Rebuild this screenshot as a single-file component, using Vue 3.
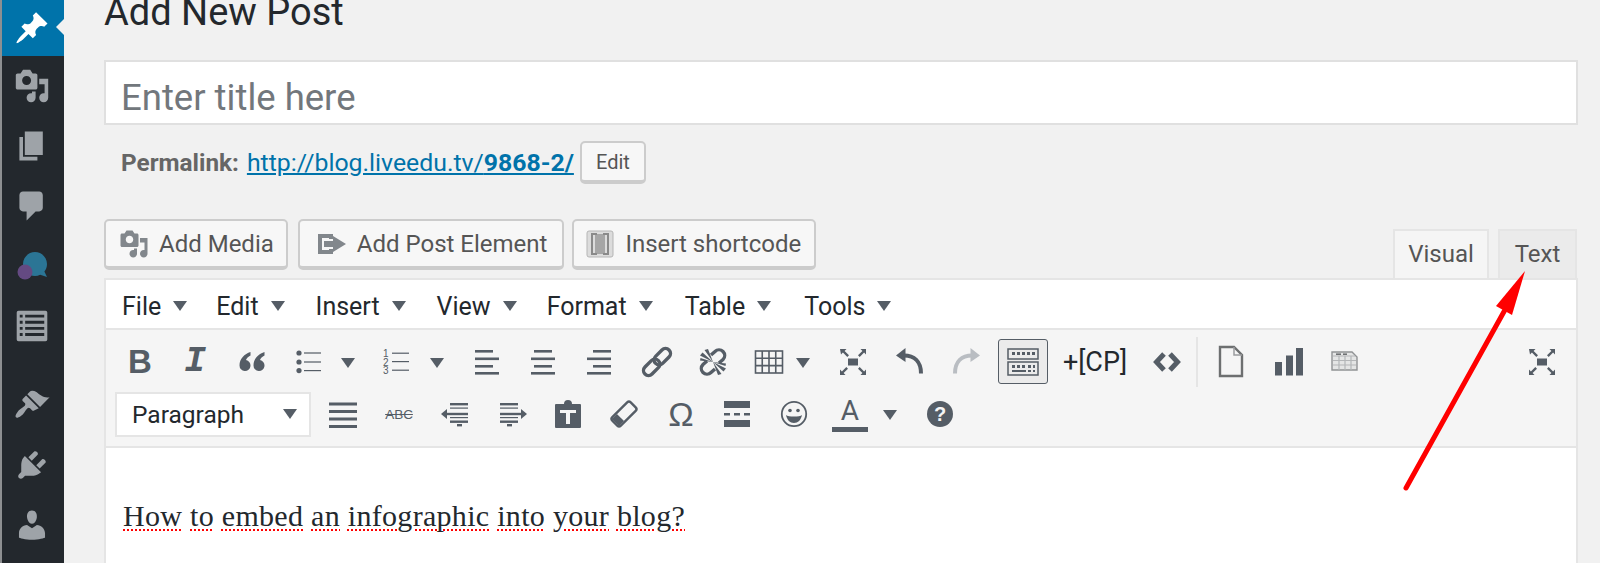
<script setup>
const media = 'M13 11V4c0-.55-.45-1-1-1h-1.67L9 1H5L3.67 3H2c-.55 0-1 .45-1 1v7c0 .55.45 1 1 1h10c.55 0 1-.45 1-1zM7 4.5c1.38 0 2.5 1.12 2.5 2.5S8.38 9.5 7 9.5 4.5 8.38 4.5 7 5.62 4.5 7 4.5zM14 6h5v10.5c0 1.38-1.12 2.5-2.5 2.5S14 17.88 14 16.5s1.12-2.5 2.5-2.5c.17 0 .34.02.5.05V9h-3V6zm-4 8.05V13h2v3.5c0 1.38-1.12 2.5-2.5 2.5S7 17.88 7 16.5 8.12 14 9.5 14c.17 0 .34.02.5.05z'

const sideItems = [
  { id: 'pin', d: 'M10.44 3.02l1.82-1.82 6.36 6.35-1.83 1.82c-1.05-.68-2.48-.57-3.41.36l-.75.75c-.92.93-1.04 2.35-.35 3.41l-1.83 1.82-2.41-2.41-2.8 2.79c-.42.42-3.38 2.71-3.8 2.29s1.86-3.39 2.28-3.81l2.79-2.79L4.1 9.36l1.83-1.82c1.05.69 2.48.57 3.4-.36l.75-.75c.93-.92 1.05-2.35.36-3.41z' },
  { id: 'media', d: media },
  { id: 'pages', d: 'M6 15V2h10v13H6zm-1 1h8v2H3V5h2v11z' },
  { id: 'comments', d: 'M5 2h9c1.1 0 2 .9 2 2v7c0 1.1-.9 2-2 2h-2l-5 5v-5H5c-1.1 0-2-.9-2-2V4c0-1.1.9-2 2-2z' },
  { id: 'chat' },
  { id: 'list', d: 'M2.5 1.5h15a1 1 0 0 1 1 1v15a1 1 0 0 1-1 1h-15a1 1 0 0 1-1-1v-15a1 1 0 0 1 1-1zM3.2 3.7v1.6h1.6V3.7zm3 0v1.6h10.6V3.7zm-3 3.4v1.6h1.6V7.1zm3 0v1.6h10.6V7.1zm-3 3.4v1.6h1.6v-1.6zm3 0v1.6h10.6v-1.6zm-3 3.4v1.6h1.6v-1.6zm3 0v1.6h10.6v-1.6z' },
  { id: 'brush', d: 'M14.48 11.06L7.41 3.99l1.5-1.5c.5-.56 2.3-.47 3.51.32 1.21.8 1.43 1.28 2.91 2.1 1.18.64 2.45 1.26 4.45.85zm-.71.71L6.7 4.7 4.93 6.47c-.39.39-.39 1.02 0 1.41l1.06 1.06c.39.39.39 1.03 0 1.42-.6.6-1.43 1.11-2.21 1.69-.35.26-.7.53-1.01.84-.74.74-2.5 3-1.7 3.9.8.9 3.2-1 3.9-1.7.31-.31.58-.66.84-1.01.58-.78 1.09-1.61 1.69-2.21.39-.39 1.03-.39 1.42 0l1.06 1.06c.39.39 1.02.39 1.41 0z' },
  { id: 'plugin', d: 'M13.11 4.36L9.87 7.6 8 5.73l3.24-3.24c.35-.34 1.05-.2 1.56.32.52.51.66 1.21.31 1.55zm-8 1.77l.91-1.12 9.01 9.01-1.19.84c-.71.71-2.63 1.16-3.82 1.16H6.14L4.9 17.26c-.59.59-1.54.59-2.12 0-.59-.58-.59-1.53 0-2.12l1.24-1.24v-3.88c0-1.13.4-3.19 1.09-3.89zm7.26 3.97l3.24-3.24c.34-.35 1.04-.21 1.55.31.52.51.66 1.21.31 1.55l-3.24 3.25z' },
  { id: 'user', d: 'M10 9.25c-2.27 0-2.73-3.44-2.73-3.44C7 4.02 7.82 2 9.97 2c2.16 0 2.98 2.02 2.71 3.81 0 0-.41 3.44-2.68 3.44zm0 2.57L12.72 10c2.39 0 4.52 2.33 4.52 4.53v2.49s-3.65 1.13-7.24 1.13c-3.65 0-7.24-1.13-7.24-1.13v-2.49c0-2.25 1.94-4.48 4.47-4.48z' },
]

const menus = [
  { label: 'File', gap: 0 },
  { label: 'Edit', gap: 29 },
  { label: 'Insert', gap: 31 },
  { label: 'View', gap: 31 },
  { label: 'Format', gap: 30 },
  { label: 'Table', gap: 32 },
  { label: 'Tools', gap: 33 },
]

const caret = '<path d="M6 9h14l-7 10z"/>'
const bars = (rows) => rows.map(r => `<rect x="${r[0]}" y="${r[1]}" width="${r[2]}" height="${r[3] || 2.6}"/>`).join('')
const fullscreen = '<rect x="8" y="9.5" width="10" height="7"/><path d="M0 0h6.5L4.6 1.9 9 6.3 7.3 8 2.9 3.6 1 5.5zM26 0v5.5l-1.9-1.9L19.7 8 18 6.3l4.4-4.4L20.5 0zM0 26v-5.5l1.9 1.9L6.3 18 8 19.7l-4.4 4.4L5.5 26zM26 26h-5.5l1.9-1.9L18 19.7l1.7-1.7 4.4 4.4 1.9-1.9z"/>'

const icons = {
  quote: '<path d="M11.500 3C5.500 5 .5 9.500 .5 16.500a5.500 5.500 0 1 0 6.500-5.400c.6-1.800 2.200-3.400 4.500-4.600zM25.500 3c-6 2-11 6.500-11 13.500a5.500 5.500 0 1 0 6.500-5.400c.6-1.800 2.200-3.400 4.500-4.600z"/>',
  bullist: '<circle cx="3" cy="4" r="2.6"/><circle cx="3" cy="13" r="2.6"/><circle cx="3" cy="21.6" r="2.6"/><rect x="8" y="3.4" width="17" height="1.2"/><rect x="8" y="12.4" width="17" height="1.2"/><rect x="8" y="21" width="17" height="1.2"/>',
  numlist: '<text x="-1" y="8" class="num">1</text><text x="-1" y="16.500" class="num">2</text><text x="-1" y="25" class="num">3</text><rect x="8" y="3.600" width="17" height="1.2"/><rect x="8" y="12" width="17" height="1.2"/><rect x="8" y="20.600" width="17" height="1.2"/>',
  left: bars([[1, 1, 18], [1, 8.5, 24], [1, 16, 18], [1, 23, 24]]),
  center: bars([[4, 1, 18], [1, 8.5, 24], [4, 16, 18], [1, 23, 24]]),
  right: bars([[7, 1, 18], [1, 8.5, 24], [7, 16, 18], [1, 23, 24]]),
  link: '<g transform="rotate(-45 13 13)" fill="none" stroke="#555d66" stroke-width="3.400"><rect x="-4" y="8" width="19" height="10" rx="5"/><rect x="11" y="8" width="19" height="10" rx="5"/></g>',
  unlink: '<g fill="none" stroke="#555d66" stroke-width="3.400"><path d="M11 6L15 2.500a5.500 5.500 0 0 1 8 8L19 14"/><path d="M15 20l-4 3.500a5.500 5.500 0 0 1-8-8L7 12"/></g><path d="M13 13L0 6.500 2.500 3.500zM13 13L4.500 1 8 0zM13 13L0 11.500 .5 9zM13 13L26 19.500 23.500 22.500zM13 13L21.500 25 18 26zM13 13L26 14.500 25.500 17z"/>',
  table: '<g fill="none" stroke="#555d66" stroke-width="1.6"><rect x="-.5" y="2" width="27" height="22"/><path d="M-.5 9.300h27M-.5 16.600h27M6.250 2v22M13 2v22M19.750 2v22"/></g>',
  fullscreen,
  undo: '<path d="M-1 6.500L8.500 -1v14z"/><path d="M7 6.500c10 0 17 6 17 18" fill="none" stroke="#555d66" stroke-width="4"/>',
  redo: '<g fill="#b9bdc2"><path d="M27 6.500L17.500 -1v14z"/></g><path d="M19 6.500c-10 0-17 6-17 18" fill="none" stroke="#b9bdc2" stroke-width="4"/>',
  code: '<path d="M10 5L2.500 13l7.500 8M16 5l7.500 8-7.500 8" fill="none" stroke="#555d66" stroke-width="5"/>',
  doc: '<path d="M2 0h14l8 8v21H2z" fill="none" stroke="#6d6f70" stroke-width="2.400" transform="translate(0 -2)"/><path d="M16 -2v8h8" fill="none" stroke="#9a9c9e" stroke-width="1.500"/>',
  chart: '<rect x="0" y="13" width="7" height="13.500"/><rect x="11" y="6.500" width="7" height="20"/><rect x="22" y="-1" width="7" height="27.500" transform="translate(-1 0)"/>',
  tblgray: '<path d="M1 3h20l5 5v13H1z" fill="#e4e5e5" stroke="#909294" stroke-width="1.400"/><path d="M2 7h22M2 11.500h23M2 16h23M8 7v14M14 7v14M20 7v14" stroke="#b4b6b8" stroke-width="1.200" fill="none"/><rect x="5" y="4.400" width="5" height="1.600" fill="#6f7173"/><rect x="12" y="4.400" width="4" height="1.600" fill="#6f7173"/>',
  justify: bars([[-1, 1.500, 28, 3], [-1, 9, 28, 3], [-1, 16.500, 28, 3], [-1, 24, 28, 3]]),
  outdent: '<path d="M0 13l6-5v10z"/>' + bars([[9, 2, 18, 2.4], [6, 11.800, 21, 2.400], [9, 19.500, 18, 2.400]]) + '<rect x="9" y="6.500" width="18" height="1.200"/><rect x="9" y="16" width="18" height="1.200"/><rect x="16" y="23" width="5" height="2.400"/>',
  indent: '<path d="M27 13l-6-5v10z"/>' + bars([[0, 2, 18, 2.4], [0, 11.800, 21, 2.400], [0, 19.500, 18, 2.400]]) + '<rect x="0" y="6.500" width="18" height="1.200"/><rect x="0" y="16" width="18" height="1.200"/><rect x="7" y="23" width="5" height="2.400"/>',
  paste: '<path fill-rule="evenodd" d="M1 3h8a4 4 0 0 1 8 0h8a1 1 0 0 1 1 1v22a1 1 0 0 1-1 1H1a1 1 0 0 1-1-1V4a1 1 0 0 1 1-1zM5 9v3h6v11h4V12h6V9z"/>',
  eraser: '<g transform="rotate(-45 13 13)"><rect x="0" y="7" width="26" height="12" rx="2.500" fill="none" stroke="#555d66" stroke-width="2.400"/><path d="M1 8h7v10H1z"/></g>',
  hr: '<rect x="0" y="0" width="26" height="7"/><rect x="0" y="19" width="26" height="7"/><path d="M0 12h6v2.400H0zM10 12h6v2.400h-6zM20 12h6v2.400h-6z"/>',
  smile: '<circle cx="13" cy="13" r="12.200" fill="none" stroke="#555d66" stroke-width="1.800"/><circle cx="9" cy="9.500" r="1.800"/><circle cx="17" cy="9.500" r="1.800"/><path d="M5 14c2 2 14 2 16 0-1 5-4 8-8 8s-7-3-8-8z"/>',
}

const row1 = [
  { text: 'B', cls: 't-bold', x: 140 },
  { text: 'I', cls: 't-ital', x: 195 },
  { icon: 'quote', x: 252 },
  { icon: 'bullist', x: 309 },
  { icon: 'caret', x: 348 },
  { icon: 'numlist', x: 397 },
  { icon: 'caret', x: 437 },
  { icon: 'left', x: 487 },
  { icon: 'center', x: 543 },
  { icon: 'right', x: 599 },
  { icon: 'link', x: 657 },
  { icon: 'unlink', x: 713 },
  { icon: 'table', x: 769 },
  { icon: 'caret', x: 803 },
  { icon: 'fullscreen', x: 853 },
  { icon: 'undo', x: 910 },
  { icon: 'redo', x: 966 },
  { kitchen: true, x: 1023, w: 50 },
  { text: '+[CP]', cls: 't-cp', x: 1095, w: 76 },
  { icon: 'code', x: 1167 },
  { sep: true, x: 1197, w: 2 },
  { icon: 'doc', x: 1231 },
  { icon: 'chart', x: 1288 },
  { icon: 'tblgray', x: 1344 },
  { icon: 'fullscreen', x: 1542 },
]

const row2 = [
  { icon: 'justify', x: 343 },
  { text: 'ABC', cls: 't-abc', x: 399 },
  { icon: 'outdent', x: 454 },
  { icon: 'indent', x: 513 },
  { icon: 'paste', x: 568 },
  { icon: 'eraser', x: 624 },
  { text: '\u03A9', cls: 't-omega', x: 681 },
  { icon: 'hr', x: 737 },
  { icon: 'smile', x: 794 },
  { text: 'A', cls: 't-color', x: 850, w: 36 },
  { icon: 'caret', x: 890 },
  { text: '?', cls: 't-help', x: 940 },
]

// gap in front of each tool comes from the centre positions
const withGaps = (list, startX) => {
  let right = startX
  return list.map(item => {
    const w = item.w || 26
    const ml = item.x - w / 2 - right
    right = item.x + w / 2
    return { ...item, w, ml }
  })
}
const tools1 = withGaps(row1, 106)
const tools2 = withGaps(row2, 311)
const iconFor = name => (name === 'caret' ? caret : icons[name])

const words = ['How', 'to', 'embed', 'an', 'infographic', 'into', 'your', 'blog?']
</script>

<template>
  <div class="page">
    <aside class="sidebar">
      <div v-for="item in sideItems" :key="item.id" class="side-item" :class="'side-' + item.id">
        <svg v-if="item.d" viewBox="0 0 20 20" class="side-icon"><path :d="item.d" /></svg>
        <svg v-else viewBox="0 0 36 36" class="side-icon">
          <path d="M21 4c6.600 0 12 5.400 12 12 0 3-1 5.500-2.600 7.600L33 29l-6.800-2.200C24.600 27.600 22.900 28 21 28 14.400 28 9 22.600 9 16S14.400 4 21 4z" fill="#2b7595" />
          <circle cx="11" cy="24" r="7.500" fill="#644a82" />
        </svg>
      </div>
    </aside>

    <main class="main">
      <h1 class="heading">Add New Post</h1>
      <div class="title-box">Enter title here</div>

      <div class="permalink">
        <strong>Permalink:</strong>
        <a class="perma-link">http://blog.liveedu.tv/<b>9868-2/</b></a>
        <button class="btn btn-small">Edit</button>
      </div>

      <div class="media-row">
        <div class="media-buttons">
          <button class="btn btn-media">
            <svg viewBox="0 0 20 20" class="btn-icon"><path :d="media" /></svg>
            Add Media
          </button>
          <button class="btn btn-element">
            <svg viewBox="0 0 28 24" class="btn-icon btn-icon-wide">
              <path d="M0 2h15v5h-4V6H4v12h7v-1h4v5H0z" />
              <path d="M6 9h9V4l13 8-13 8v-5H6z" />
            </svg>
            Add Post Element
          </button>
          <button class="btn btn-short">
            <svg viewBox="0 0 28 28" class="btn-icon btn-icon-short">
              <rect x="1" y="1" width="26" height="26" rx="2" fill="#dcdcdc" stroke="#b5b5b5" />
              <rect x="9" y="4" width="10" height="20" fill="#a6a6a6" />
              <path d="M11 4H6v20h5M17 4h5v20h-5" fill="none" stroke="#8a8a8a" stroke-width="2" />
            </svg>
            Insert shortcode
          </button>
        </div>
        <div class="tabs">
          <div class="tab tab-on">Visual</div>
          <div class="tab">Text</div>
        </div>
      </div>

      <section class="editor">
        <div class="menubar">
          <span v-for="m in menus" :key="m.label" class="menu" :style="{ marginLeft: m.gap + 'px' }">
            {{ m.label }}
            <svg viewBox="0 0 14 10" class="menu-caret"><path d="M0 0h14L7 10z" /></svg>
          </span>
        </div>

        <div class="toolbar">
          <div class="tool-row">
            <template v-for="(t, i) in tools1" :key="i">
              <div class="tool" :style="{ width: t.w + 'px', marginLeft: t.ml + 'px' }" :class="{ 'tool-sep': t.sep, 'tool-kitchen': t.kitchen }">
                <span v-if="t.text" :class="t.cls">{{ t.text }}</span>
                <svg v-else-if="t.icon" viewBox="0 0 26 26" class="tool-icon" v-html="iconFor(t.icon)"></svg>
                <svg v-else-if="t.kitchen" viewBox="0 0 32 28" class="kitchen-icon">
                  <rect x="1" y="1" width="30" height="10" fill="none" stroke="#555d66" stroke-width="1.500" />
                  <rect x="1" y="14" width="30" height="13" fill="none" stroke="#555d66" stroke-width="1.500" />
                  <path d="M5 4h3v3H5zM10 4h3v3h-3zM15 4h3v3h-3zM20 4h3v3h-3zM25 4h3v3h-3zM5 17h3v3H5zM10 17h3v3h-3zM15 17h3v3h-3zM21 17h3v3h-3zM26 17h2v3h-2zM5 22h14v2H5zM21 22h3v2h-3zM26 22h2v2h-2z" />
                </svg>
              </div>
            </template>
          </div>
          <div class="tool-row">
            <div class="select">
              Paragraph
              <svg viewBox="0 0 14 10" class="select-caret"><path d="M0 0h14L7 10z" /></svg>
            </div>
            <div v-for="(t, i) in tools2" :key="i" class="tool" :style="{ width: t.w + 'px', marginLeft: t.ml + 'px' }">
              <span v-if="t.text" :class="t.cls">{{ t.text }}</span>
              <svg v-else viewBox="0 0 26 26" class="tool-icon" v-html="iconFor(t.icon)"></svg>
            </div>
          </div>
        </div>

        <div class="content">
          <span v-for="(w, i) in words" :key="w"><span class="spell">{{ w }}</span>{{ i < words.length - 1 ? ' ' : '' }}</span>
        </div>
      </section>
    </main>

    <svg class="arrow" viewBox="0 0 1600 563" width="1600" height="563">
      <line x1="1406" y1="488" x2="1506" y2="308" stroke="#ff0000" stroke-width="5" stroke-linecap="round" />
      <path d="M1525 271L1496 306l16 9z" fill="#ff0000" />
    </svg>
  </div>
</template>

<style>
html, body { margin: 0; background: #f1f1f1; overflow: hidden; }
</style>

<style scoped>
.page {
  display: flex;
  position: relative;
  width: 1600px;
  height: 563px;
  overflow: hidden;
  background: #f1f1f1;
  font-family: Roboto, "Liberation Sans", sans-serif;
}

.sidebar {
  width: 60px;
  padding-right: 2px;
  flex: none;
  background: #23282d;
  border-left: 2px solid #8d8f91;
  display: flex;
  flex-direction: column;
}
.side-item {
  height: 60px;
  display: flex;
  align-items: center;
  justify-content: center;
  flex: none;
}
.side-icon { width: 36px; height: 36px; fill: #9ea3a8; }
.side-pin {
  height: 56px;
  margin-right: -2px;
  padding-right: 2px;
  background: #0073aa;
  position: relative;
}
.side-pin .side-icon { fill: #fff; }
.side-pin::after {
  content: "";
  position: absolute;
  right: 0;
  top: 19px;
  border: 8px solid transparent;
  border-right-color: #f1f1f1;
  border-left-width: 0;
}
.side-list { margin-bottom: 19px; }

.main {
  flex: 1;
  padding-left: 40px;
  padding-right: 22px;
  min-width: 0;
}
.heading {
  margin: 0;
  height: 60px;
  font-size: 38px;
  font-weight: 400;
  line-height: 24px;
  color: #23282d;
}
.title-box {
  height: 56px;
  line-height: 61px;
  padding-top: 5px;
  padding-left: 15px;
  background: #fff;
  border: 2px solid #e0e0e0;
  font-size: 36.5px;
  color: #72777c;
}
.permalink {
  display: flex;
  align-items: center;
  height: 43px;
  margin-top: 16px;
  padding-left: 17px;
  font-size: 24.3px;
  color: #666;
}
.permalink strong { font-weight: 700; }
.perma-link {
  margin-left: 8px;
  color: #0073aa;
  text-decoration: underline;
  font-size: 24.8px;
}
.btn {
  display: inline-flex;
  align-items: center;
  height: 51px;
  padding: 1px 13px 0;
  box-sizing: border-box;
  background: #f7f7f7;
  border: 2px solid #ccc;
  border-bottom-width: 4px;
  border-radius: 5px;
  color: #555;
  font-family: inherit;
  font-size: 24px;
}
.btn-media { padding-right: 12px; }
.btn-element { padding: 1px 15px 0 18px; }
.btn-short { margin-left: -2px; padding: 1px 13px 0 12px; }
.btn-small {
  height: 43px;
  width: 66px;
  margin-left: 6px;
  padding: 0;
  justify-content: center;
  font-size: 20px;
}
.btn-icon { width: 30px; height: 30px; fill: #82878c; margin-right: 10px; flex: none; }
.btn-icon-wide { width: 28px; height: 24px; margin-right: 11px; }
.btn-icon-short { width: 28px; height: 28px; margin-right: 11px; }

.media-row {
  display: flex;
  justify-content: space-between;
  height: 59px;
  margin-top: 35px;
}
.media-buttons { display: flex; gap: 10px; align-items: flex-start; }
.tabs { display: flex; align-items: flex-end; gap: 9px; padding-right: 1px; }
.tab {
  width: 79px;
  height: 49px;
  box-sizing: border-box;
  border: 2px solid #e5e5e5;
  border-bottom: 0;
  background: #ebebeb;
  color: #555;
  font-size: 24px;
  line-height: 47px;
  text-align: center;
}
.tab-on { width: 96px; background: #f5f5f5; }

.editor {
  border: 2px solid #e5e5e5;
  background: #fff;
  height: 400px;
}
.menubar {
  display: flex;
  align-items: center;
  height: 50px;
  padding: 4px 0 0 16px;
  box-sizing: border-box;
  background: #fff;
  border-bottom: 2px solid #e5e5e5;
}
.menu { display: flex; align-items: center; font-size: 25px; color: #23282d; }
.menu-caret { width: 14px; height: 10px; fill: #555d66; margin-left: 12px; }

.toolbar {
  height: 118px;
  padding-top: 6px;
  background: #f5f5f5;
  border-bottom: 2px solid #e5e5e5;
  box-sizing: border-box;
}
.tool-row { display: flex; align-items: center; height: 51px; }
.tool-row + .tool-row { height: 54px; }
.tool {
  height: 26px;
  flex: none;
  display: flex;
  align-items: center;
  justify-content: center;
  color: #555d66;
}
.tool-icon { width: 26px; height: 26px; fill: #555d66; overflow: visible; }
.tool-sep { height: 50px; background: #e5e5e5; }
.tool-kitchen {
  height: 45px;
  box-sizing: border-box;
  border: 1.5px solid #555d66;
  border-radius: 3px;
  background: #ebebeb;
}
.kitchen-icon { width: 32px; height: 28px; fill: #555d66; }

.select {
  display: flex;
  align-items: center;
  justify-content: space-between;
  width: 196px;
  height: 45px;
  box-sizing: border-box;
  margin-left: 9px;
  padding: 0 12px 0 15px;
  border: 2px solid #e5e5e5;
  background: #fff;
  font-size: 24.5px;
  color: #23282d;
}
.select-caret { width: 14px; height: 10px; fill: #555d66; }

.t-bold { font: 700 33px "Liberation Sans", sans-serif; }
.t-ital { font: italic 700 36px "Liberation Mono", monospace; }
.t-cp { font: 400 27px Roboto, sans-serif; color: #23282d; white-space: nowrap; }
.t-abc { font: 400 13.5px "Liberation Sans", sans-serif; text-decoration: line-through; }
.t-omega { font: 400 34px "Liberation Sans", sans-serif; }
.t-color {
  font: 400 28px/28px Roboto, sans-serif;
  width: 36px;
  height: 35px;
  text-align: center;
  box-sizing: border-box;
  border-bottom: 5px solid #555d66;
}
.t-help {
  display: block;
  width: 26px;
  height: 26px;
  border-radius: 50%;
  background: #555d66;
  color: #f5f5f5;
  font: 700 20px/26px "Liberation Sans", sans-serif;
  text-align: center;
}
:deep(.num) { font: 400 10px "Liberation Sans", sans-serif; }

.content {
  padding: 48px 16px 0 17px;
  font-family: "Liberation Serif", serif;
  font-size: 30px;
  letter-spacing: 0.3px;
  line-height: 40px;
  color: #23282d;
}
.spell {
  text-decoration: underline dotted #ff0000 2px;
  text-underline-offset: 3px;
}

.arrow { position: absolute; left: 0; top: 0; pointer-events: none; }
</style>
